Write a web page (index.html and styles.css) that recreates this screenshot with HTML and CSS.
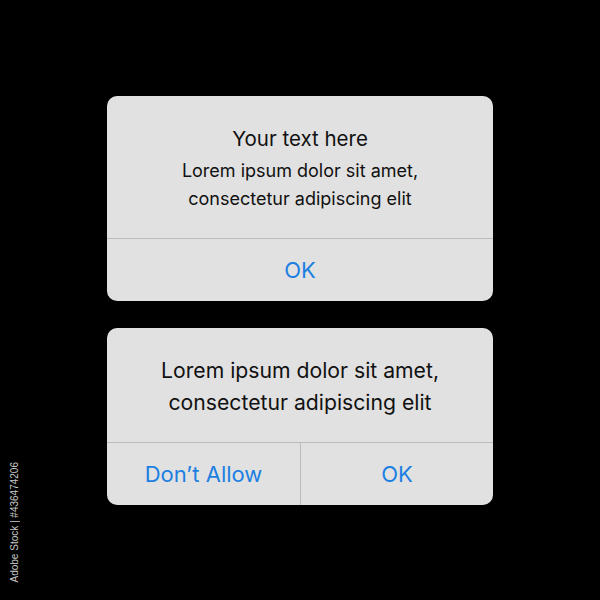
FILE: index.html
```html
<!DOCTYPE html>
<html lang="en">
<head>
    <meta charset="UTF-8">
    <meta name="viewport" content="width=device-width, initial-scale=1.0">
    <title>Alerts</title>
    <link rel="stylesheet" href="styles.css">
</head>
<body>
    <div class="stack">
        <div class="alert">
            <div class="alert-body">
                <div class="alert-title">Your text here</div>
                <div class="alert-text">Lorem ipsum dolor sit amet,<br>consectetur adipiscing elit</div>
            </div>
            <div class="actions">
                <button class="action">OK</button>
            </div>
        </div>
        <div class="alert">
            <div class="alert-body large">
                <div class="alert-message">Lorem ipsum dolor sit amet,<br>consectetur adipiscing elit</div>
            </div>
            <div class="actions split">
                <button class="action">Don’t Allow</button>
                <button class="action">OK</button>
            </div>
        </div>
    </div>
    <div class="credit">Adobe Stock | #436474206</div>
</body>
</html>
```

FILE: styles.css
```css
body {
    margin: 0;
    height: 100vh;
    background: #000;
    display: flex;
    justify-content: center;
    align-items: center;
    font-family: Inter, "Noto Sans", sans-serif;
}
.stack {
    display: flex;
    flex-direction: column;
    gap: 27px;
    width: 386px;
}
.alert {
    background: #e1e1e1;
    border-radius: 10px;
    overflow: hidden;
    color: #111;
}
.alert-body {
    padding: 31px 20px 25px;
    text-align: center;
}
.alert-body.large {
    padding: 26px 20px 24px;
}
.alert-title {
    font-size: 20.5px;
    line-height: 24px;
    margin-bottom: 6px;
}
.alert-text {
    font-size: 18px;
    line-height: 28px;
}
.alert-message {
    font-size: 21.2px;
    line-height: 32px;
}
.actions {
    display: grid;
    grid-template-columns: 1fr;
    border-top: 1px solid #bcbcbc;
}
.actions.split {
    grid-template-columns: 1fr 1fr;
}
.action {
    height: 62px;
    border: none;
    background: none;
    font-family: inherit;
    font-size: 22px;
    color: #1c7fe2;
    padding: 0;
}
.split .action + .action {
    border-left: 1px solid #bcbcbc;
}
.credit {
    position: absolute;
    left: 9px;
    top: 462px;
    writing-mode: vertical-rl;
    transform: rotate(180deg);
    font-size: 10px;
    color: #c8c8c8;
    font-family: "Liberation Sans", sans-serif;
}
```
